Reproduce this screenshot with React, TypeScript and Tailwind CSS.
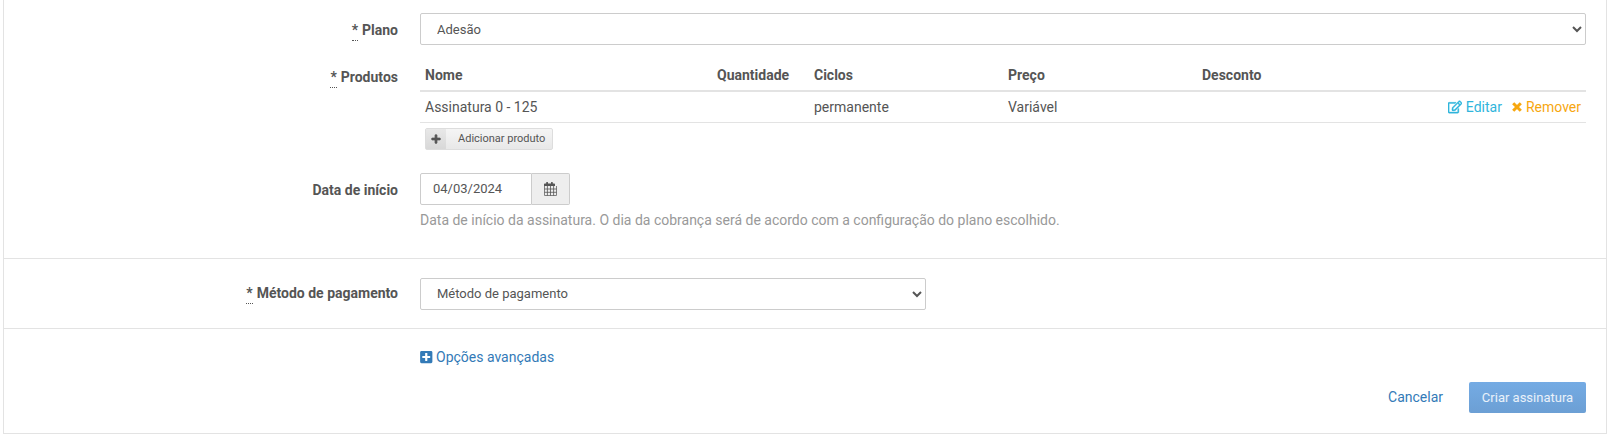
import { FaPlus, FaPlusSquare, FaRegEdit } from "react-icons/fa";

const rowLabel = "w-[394px] shrink-0 text-right text-[14px] font-bold text-[#555] leading-[20px]";

function Required() {
  return <abbr className="mr-[4px] inline-block h-[17px] border-b border-dotted border-[#555] leading-[13px] [text-decoration:none]">*</abbr>;
}

function CalendarIcon() {
  return (
    <svg width="13" height="14" viewBox="0 0 13 14" className="text-[#555]">
      <path fill="currentColor" d="M.8 1.5h1.4V.6c0-.3.2-.6.5-.6h.8c.3 0 .5.3.5.6v.9h3V.6c0-.3.2-.6.5-.6h.8c.3 0 .5.3.5.6v.9h1.4c.5 0 .8.3.8.8V4H0V2.3c0-.5.3-.8.8-.8z" />
      <path
        fill="none"
        stroke="currentColor"
        strokeWidth="0.8"
        d="M.4 4v9.2c0 .2.2.4.4.4h11.4c.2 0 .4-.2.4-.4V4M.4 7h12.2M.4 10.3h12.2M3.4 4v9.6M6.5 4v9.6M9.6 4v9.6"
      />
    </svg>
  );
}

function RemoveIcon() {
  return (
    <svg width="10" height="10" viewBox="0 0 10 10" className="text-[#f7a70f]">
      <path fill="none" stroke="currentColor" strokeWidth="3" d="M1.2 1.2l7.6 7.6M8.8 1.2L1.2 8.8" />
    </svg>
  );
}

export default function App() {
  return (
    <div className="h-[434px] bg-white pl-[3px] pr-[7px] font-['Roboto',sans-serif] text-[#555]">
      <div className="h-[434px] border-x border-b border-[#e3e3e3]">
        <div className="h-[259px] border-b border-[#e3e3e3] pt-[13px] pr-[20px]">
          <div className="flex h-[32px] gap-[22px]">
            <label className={`${rowLabel} pt-[7px]`}>
              <Required />Plano
            </label>
            <select className="h-[32px] flex-1 rounded-[2px] border border-[#ccc] bg-white pl-[12px] text-[13px] text-[#555]">
              <option>Adesão</option>
            </select>
          </div>

          <div className="mt-[16px] flex gap-[22px]">
            <label className={`${rowLabel} pt-[6px]`}>
              <Required />Produtos
            </label>
            <div className="flex-1">
              <div className="grid h-[31px] grid-cols-[292px_97px_194px_194px_1fr] items-center border-b-2 border-[#e3e3e3] pb-[1px] pl-[5px] text-[14px] font-bold">
                <span>Nome</span>
                <span>Quantidade</span>
                <span>Ciclos</span>
                <span>Preço</span>
                <span>Desconto</span>
              </div>
              <div className="grid h-[31px] grid-cols-[292px_97px_194px_194px_1fr] items-center border-b border-[#e3e3e3] pl-[5px] text-[14px]">
                <span>Assinatura 0 - 125</span>
                <span />
                <span>permanente</span>
                <span>Variável</span>
                <div className="flex items-center justify-end gap-[10px] pr-[5px]">
                  <a className="flex items-center gap-[4px] text-[#2fb5dc]">
                    <FaRegEdit className="text-[14px] [&_path]:stroke-current [&_path]:[stroke-width:16px]" />
                    Editar
                  </a>
                  <a className="flex items-center gap-[4px] text-[#f7a70f]">
                    <RemoveIcon />
                    Remover
                  </a>
                </div>
              </div>
              <button className="mt-[5px] ml-[5px] flex h-[22px] w-[128px] items-center rounded-[2px] border border-[#ddd] bg-gradient-to-b from-[#f5f5f5] to-[#e8e8e8] text-[11px] text-[#555]">
                <span className="flex h-full w-[20px] items-center justify-center bg-gradient-to-b from-[#e8e8e8] to-[#d8d8d8]">
                  <FaPlus className="text-[10px] [&_path]:stroke-current [&_path]:[stroke-width:40px]" />
                </span>
                <span className="ml-[12px]">Adicionar produto</span>
              </button>
            </div>
          </div>

          <div className="mt-[23px] flex gap-[22px]">
            <label className={`${rowLabel} pt-[7px]`}>Data de início</label>
            <div>
              <div className="flex h-[32px] w-[150px]">
                <div className="flex w-[112px] items-center rounded-l-[2px] border border-[#ccc] pl-[12px] text-[13px]">04/03/2024</div>
                <div className="flex flex-1 items-center justify-center rounded-r-[2px] border border-l-0 border-[#ccc] bg-[#eee]">
                  <CalendarIcon />
                </div>
              </div>
              <p className="mt-[5px] text-[14px] leading-[20px] text-[#999]">
                Data de início da assinatura. O dia da cobrança será de acordo com a configuração do plano escolhido.
              </p>
            </div>
          </div>
        </div>

        <div className="flex h-[70px] items-center gap-[22px] border-b border-[#e3e3e3]">
          <label className={rowLabel}>
            <Required />Método de pagamento
          </label>
          <select className="h-[32px] w-[506px] rounded-[2px] border border-[#ccc] bg-white pl-[12px] text-[13px] text-[#555]">
            <option>Método de pagamento</option>
          </select>
        </div>

        <div className="pt-[18px] pr-[20px]">
          <a className="ml-[416px] flex items-center gap-[3.5px] text-[14px] leading-[20px] text-[#337ab7]">
            <FaPlusSquare className="h-[14px] w-[12.5px]" />
            Opções avançadas
          </a>
          <div className="mt-[15px] flex items-center justify-end gap-[26px]">
            <a className="text-[14px] text-[#337ab7]">Cancelar</a>
            <button className="h-[31px] w-[117px] rounded-[2px] bg-gradient-to-b from-[#74abe4] to-[#6c9fd4] text-[13px] text-white/85">Criar assinatura</button>
          </div>
        </div>
      </div>
    </div>
  );
}
